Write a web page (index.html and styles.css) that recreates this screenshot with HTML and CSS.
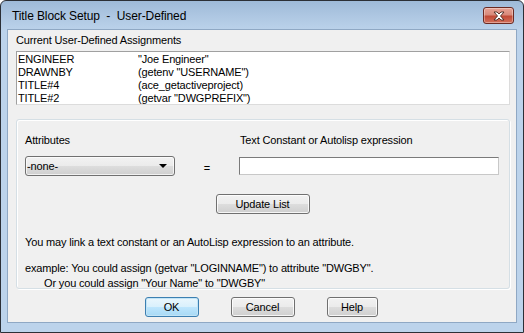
FILE: index.html
```html
<!DOCTYPE html>
<html>
<head>
<meta charset="utf-8">
<link rel="stylesheet" href="styles.css">
</head>
<body>
<div class="window">
  <div class="titlebar">
    <span class="title">Title Block Setup&nbsp; -&nbsp; User-Defined</span>
    <div class="close">
      <svg width="16" height="10" viewBox="0 0 16 10">
        <path d="M3 1 L6 1 L8 3 L10 1 L13 1 L9.5 5 L13 9 L10 9 L8 7 L6 9 L3 9 L6.5 5 Z" fill="#fff" stroke="#4a2a22" stroke-width="0.9" stroke-linejoin="round"/>
      </svg>
    </div>
  </div>
  <div class="client">
    <div class="label">Current User-Defined Assignments</div>
    <div class="listbox">
      <div class="row"><span class="c1">ENGINEER</span><span>"Joe Engineer"</span></div>
      <div class="row"><span class="c1">DRAWNBY</span><span>(getenv "USERNAME")</span></div>
      <div class="row"><span class="c1">TITLE#4</span><span>(ace_getactiveproject)</span></div>
      <div class="row"><span class="c1">TITLE#2</span><span>(getvar "DWGPREFIX")</span></div>
    </div>
    <div class="group">
      <div class="fields">
        <div class="flabel">Attributes</div>
        <div></div>
        <div class="flabel tl">Text Constant or Autolisp expression</div>
        <div class="combo"><span>-none-</span><span class="arrow"></span></div>
        <div class="eq">=</div>
        <div class="input"></div>
      </div>
      <div class="center"><div class="btn update">Update List</div></div>
      <p class="note">You may link a text constant or an AutoLisp expression to an attribute.</p>
      <p class="example">example: You could assign (getvar "LOGINNAME") to attribute "DWGBY".<br><span class="indent">Or you could assign "Your Name" to "DWGBY"</span></p>
    </div>
    <div class="buttons">
      <div class="btn ok">OK</div>
      <div class="btn cancel">Cancel</div>
      <div class="btn help">Help</div>
    </div>
  </div>
</div>
</body>
</html>
```

FILE: styles.css
```css
* { box-sizing: border-box; }
html, body { margin: 0; padding: 0; background: #ffffff; }
body {
  font-family: "Liberation Sans", Arial, sans-serif;
  font-size: 11px;
  letter-spacing: -0.15px;
  color: #000;
}
.window {
  width: 524px;
  height: 333px;
  border: 1px solid #2b2f36;
  border-radius: 6px 6px 0 0;
  background: linear-gradient(#9ebad8 0px, #aec7e2 15px, #bcd3eb 30px, #bcd3eb 100%);
  display: flex;
  flex-direction: column;
}
.titlebar {
  height: 28px;
  display: flex;
  align-items: center;
  justify-content: space-between;
  padding: 0 9px 0 11px;
}
.title {
  font-family: "Liberation Sans", Arial, sans-serif;
  font-size: 12px;
  letter-spacing: -0.1px;
  color: #000;
  padding-top: 2px;
}
.close {
  width: 31px;
  height: 17px;
  margin-top: 1px;
  border: 1px solid #6b2a22;
  border-radius: 3px;
  background: linear-gradient(#e8a395 0%, #d88a7b 45%, #c24a36 55%, #d2705c 100%);
  display: flex;
  align-items: center;
  justify-content: center;
  box-shadow: inset 0 0 0 1px rgba(255,255,255,0.35);
}
.client {
  margin: 0 6px 0 6px;
  height: 294px;
  border: 1px solid #8fa8c4;
  background: #f0f0f0;
  padding: 4px 6px 0 8px;
}
.label { line-height: 13px; height: 13px; }
.listbox {
  margin-top: 4px;
  height: 54px;
  background: #fff;
  border: 1px solid #a0a0a0;
  border-right-color: #dcdcdc;
  border-bottom-color: #dcdcdc;
  padding: 1px 0 0 1px;
}
.row { display: flex; line-height: 13px; height: 13px; }
.c1 { width: 120px; }
.group {
  margin-top: 14px;
  height: 170px;
  border: 1px solid #d5dfe5;
  border-radius: 3px;
  box-shadow: inset 1px 1px 0 #fff, 1px 1px 0 #fff;
  padding: 14px 9px 0 8px;
}
.fields {
  display: grid;
  grid-template-columns: 150px 64px 260px;
  grid-template-rows: 13px 20px;
  row-gap: 9px;
  align-items: center;
}
.flabel { line-height: 13px; }
.tl { padding-left: 1px; }
.combo {
  height: 20px;
  border: 1px solid #707070;
  border-radius: 3px;
  background: linear-gradient(#f2f2f2 0%, #ebebeb 50%, #dddddd 50%, #cfcfcf 100%);
  display: flex;
  align-items: center;
  justify-content: space-between;
  padding: 0 7px 0 1px;
  box-shadow: inset 0 0 0 1px rgba(255,255,255,0.7);
}
.arrow {
  width: 0; height: 0;
  border-left: 4px solid transparent;
  border-right: 4px solid transparent;
  border-top: 4px solid #000;
}
.eq { text-align: center; padding-left: 0; padding-top: 3px; }
.input {
  height: 18px;
  background: #fff;
  border: 1px solid #7a7a7a;
  border-right-color: #c8c8c8;
  border-bottom-color: #c8c8c8;
}
.center { display: flex; justify-content: center; margin-top: 18px; }
.btn {
  height: 20px;
  border: 1px solid #707070;
  border-radius: 3px;
  background: linear-gradient(#f2f2f2 0%, #ebebeb 50%, #dddddd 50%, #cfcfcf 100%);
  box-shadow: inset 0 0 0 1px rgba(255,255,255,0.8);
  display: flex;
  align-items: center;
  justify-content: center;
  line-height: 13px;
}
.update { width: 94px; }
.note { margin: 22px 0 0 0; line-height: 13px; }
.example { margin: 12px 0 0 0; line-height: 15px; }
.indent { padding-left: 19px; }
.buttons {
  display: flex;
  justify-content: center;
  gap: 32px;
  margin-top: 8px;
  padding-right: 4px;
}
.ok {
  width: 54px;
  border-color: #3c7fb1;
  background: linear-gradient(#eaf6fd 0%, #d9f0fc 50%, #bee6fd 50%, #a7d9f5 100%);
  box-shadow: inset 0 0 0 1px #c2e4f6;
}
.cancel { width: 64px; }
.help { width: 51px; }
```
